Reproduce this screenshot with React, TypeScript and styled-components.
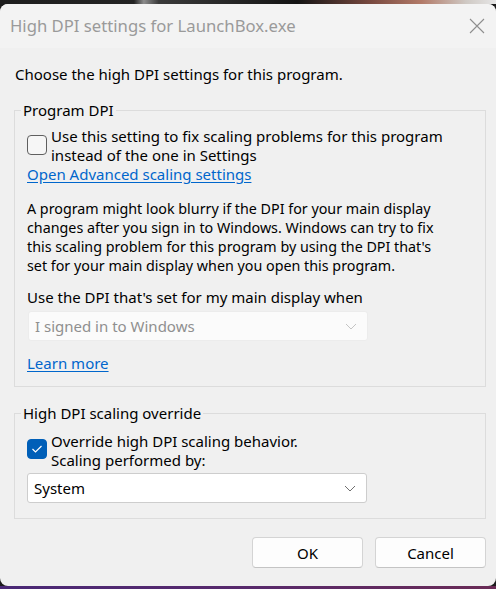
import * as React from "react";
import styled, { createGlobalStyle } from "styled-components";

const FONT = `"Segoe UI", "Noto Sans", "Open Sans", sans-serif`;

const GlobalStyle = createGlobalStyle`
  html, body {
    margin: 0;
    padding: 0;
    background: #1c1c1c;
  }
  body {
    font-family: ${FONT};
    font-size: 15px;
    color: #000;
  }
`;

const Screen = styled.div`
  width: 496px;
  height: 589px;
  display: flex;
  flex-direction: column;
  overflow: hidden;
`;

const DesktopTop = styled.div`
  height: 4px;
  flex: none;
  background: linear-gradient(
    90deg,
    #1e1e1e 0%,
    #232323 27%,
    #8c8c8c 29%,
    #3a3a3a 32%,
    #141414 60%,
    #7a4a40 75%,
    #b27a68 85%,
    #cfc9c4 94%,
    #e6e6e6 100%
  );
`;

const DesktopBottom = styled.div`
  height: 3px;
  flex: none;
  background: linear-gradient(90deg, #4a2876 0%, #582a6c 50%, #6a2b56 100%);
`;

const Window = styled.div`
  flex: 1;
  display: flex;
  flex-direction: column;
  background: #f0f0f0;
  border-radius: 8px;
  overflow: hidden;
`;

const TitleBar = styled.div`
  height: 44px;
  flex: none;
  display: flex;
  align-items: center;
  justify-content: space-between;
  padding: 0 11px 0 10px;
  background: #f3f3f3;
`;

const Title = styled.span`
  font-size: 16.7px;
  color: #9a9a9a;
  line-height: 20px;
`;

const CloseButton = styled.span`
  display: flex;
  width: 16px;
  height: 16px;
`;

const Body = styled.div`
  flex: 1;
  display: flex;
  flex-direction: column;
  padding: 17px 10px 0 14px;
`;

const Intro = styled.div`
  line-height: 19px;
  margin-left: 1px;
`;

const Group = styled.fieldset<{ $bottom: number }>`
  margin: 17px 0 0 0;
  padding: 0 12px ${(p) => p.$bottom}px 12px;
  border: 1px solid #dcdcdc;
  min-width: 0;
`;

const Legend = styled.legend`
  padding: 0 2px;
  margin-left: -6px;
  line-height: 19px;
`;

const CheckRow = styled.label<{ $top: number }>`
  display: flex;
  align-items: flex-start;
  gap: 4px;
  margin-top: ${(p) => p.$top}px;
`;

const Box = styled.span<{ $checked?: boolean; $offset: number }>`
  flex: none;
  width: 20px;
  height: 20px;
  box-sizing: border-box;
  margin-top: ${(p) => p.$offset}px;
  border-radius: 4px;
  display: flex;
  align-items: center;
  justify-content: center;
  border: 1px solid ${(p) => (p.$checked ? "#005fb8" : "#5f5f5f")};
  background: ${(p) => (p.$checked ? "#005fb8" : "#f6f6f6")};
`;

const CheckText = styled.span`
  line-height: 19px;
  white-space: nowrap;
`;

const Link = styled.a`
  display: block;
  color: #0066cc;
  text-decoration: underline;
  text-underline-offset: 2px;
  line-height: 19px;
  cursor: pointer;
`;

const Paragraph = styled.p`
  margin: 15px 0 0 0;
  font-size: 14.3px;
  line-height: 19px;
  white-space: nowrap;
`;

const Caption = styled.div`
  margin-top: 13px;
  line-height: 19px;
`;

const Select = styled.div<{ $disabled?: boolean }>`
  width: 340px;
  height: 30px;
  box-sizing: border-box;
  margin-top: ${(p) => (p.$disabled ? 4 : 3)}px;
  margin-left: ${(p) => (p.$disabled ? 1 : 0)}px;
  display: flex;
  align-items: center;
  justify-content: space-between;
  padding: 0 10px 0 6px;
  border-radius: 3px;
  border: 1px solid ${(p) => (p.$disabled ? "#ececec" : "#cdcdcd")};
  background: ${(p) => (p.$disabled ? "#fbfbfb" : "#ffffff")};
  color: ${(p) => (p.$disabled ? "#8f8f8f" : "#000")};
`;

const LearnMore = styled(Link)`
  margin-top: 13px;
  align-self: flex-start;
`;

const GroupInner = styled.div`
  display: flex;
  flex-direction: column;
`;

const Footer = styled.div`
  display: flex;
  justify-content: flex-end;
  gap: 12px;
  margin-top: 18px;
`;

const Button = styled.button`
  width: 111px;
  height: 31px;
  box-sizing: border-box;
  font-family: ${FONT};
  font-size: 15px;
  color: #000;
  background: #fdfdfd;
  border: 1px solid #d4d4d4;
  border-bottom-color: #c4c4c4;
  border-radius: 4px;
  padding: 0;
`;

const Chevron = ({ color }: { color: string }) => (
  <svg width="12" height="7" viewBox="0 0 12 7">
    <polyline points="1,1 6,6 11,1" fill="none" stroke={color} strokeWidth="1" />
  </svg>
);

const Tick = () => (
  <svg width="12" height="10" viewBox="0 0 12 10">
    <polyline points="1.5,5 4.5,8 10.5,2" fill="none" stroke="#fff" strokeWidth="1.2" />
  </svg>
);

export default function App() {
  return (
    <>
      <GlobalStyle />
      <Screen>
        <DesktopTop />
        <Window>
          <TitleBar>
            <Title>High DPI settings for LaunchBox.exe</Title>
            <CloseButton>
              <svg width="16" height="16" viewBox="0 0 16 16">
                <path d="M1 1 L15 15 M15 1 L1 15" stroke="#8e8e8e" strokeWidth="1.1" />
              </svg>
            </CloseButton>
          </TitleBar>
          <Body>
            <Intro>Choose the high DPI settings for this program.</Intro>

            <Group $bottom={13}>
              <Legend>Program DPI</Legend>
              <GroupInner>
                <CheckRow $top={7}>
                  <Box $offset={8} />
                  <CheckText>
                    Use this setting to fix scaling problems for this program
                    <br />
                    instead of the one in Settings
                  </CheckText>
                </CheckRow>
                <Link>Open Advanced scaling settings</Link>
                <Paragraph>
                  A program might look blurry if the DPI for your main display
                  <br />
                  changes after you sign in to Windows. Windows can try to fix
                  <br />
                  this scaling problem for this program by using the DPI that's
                  <br />
                  set for your main display when you open this program.
                </Paragraph>
                <Caption>Use the DPI that's set for my main display when</Caption>
                <Select $disabled>
                  <span>I signed in to Windows</span>
                  <Chevron color="#c4c4c4" />
                </Select>
                <LearnMore>Learn more</LearnMore>
              </GroupInner>
            </Group>

            <Group $bottom={15}>
              <Legend>High DPI scaling override</Legend>
              <GroupInner>
                <CheckRow $top={9}>
                  <Box $checked $offset={7}>
                    <Tick />
                  </Box>
                  <CheckText>
                    Override high DPI scaling behavior.
                    <br />
                    Scaling performed by:
                  </CheckText>
                </CheckRow>
                <Select>
                  <span>System</span>
                  <Chevron color="#707070" />
                </Select>
              </GroupInner>
            </Group>

            <Footer>
              <Button>OK</Button>
              <Button>Cancel</Button>
            </Footer>
          </Body>
        </Window>
        <DesktopBottom />
      </Screen>
    </>
  );
}
